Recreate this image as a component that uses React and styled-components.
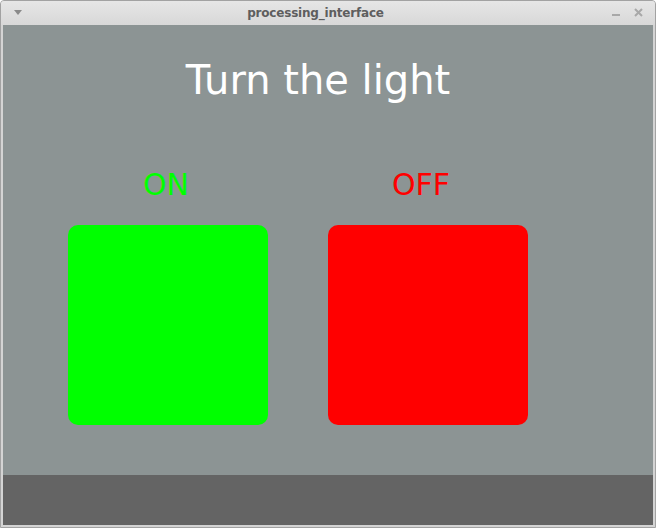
import React from "react";
import styled, { createGlobalStyle } from "styled-components";

const GlobalStyle = createGlobalStyle`
	html, body {
		margin: 0;
		padding: 0;
		background: #ffffff;
	}
	* {
		box-sizing: border-box;
	}
`;

function Switch({ label, color, shift }) {
	return (
		<Column>
			<Label color={color} $shift={shift}>
				{label}
			</Label>
			<Square color={color} />
		</Column>
	);
}

function App() {
	return (
		<>
			<GlobalStyle />
			<Window>
				<TitleBar>
					<Menu />
					<Title>processing_interface</Title>
					<Controls>
						<Minimize />
						<Close>
							<svg width="9" height="9" viewBox="0 0 9 9">
								<path d="M1 1 L8 8 M8 1 L1 8" stroke="#a8a8a8" strokeWidth="2" />
							</svg>
						</Close>
					</Controls>
				</TitleBar>
				<Canvas>
					<Heading>Turn the light</Heading>
					<Row>
						<Switch label="ON" color="#00ff00" shift={-2} />
						<Switch label="OFF" color="#ff0000" shift={-7} />
					</Row>
				</Canvas>
				<BottomBar />
			</Window>
		</>
	);
}

const Window = styled.div`
	width: 656px;
	height: 528px;
	display: flex;
	flex-direction: column;
	background: #d4d4d4;
	border: 1px solid #a2a2a2;
	border-radius: 4px 4px 0 0;
	padding: 0 2px 2px 2px;
	overflow: hidden;
`;

const TitleBar = styled.div`
	height: 24px;
	flex: none;
	display: flex;
	align-items: center;
	background: linear-gradient(#e6e6e6, #d8d8d8);
	margin: 0 -2px;
	padding: 0 12px 0 13px;
	font-family: "DejaVu Sans", sans-serif;
`;

const Menu = styled.div`
	width: 0;
	height: 0;
	border-left: 4px solid transparent;
	border-right: 4px solid transparent;
	border-top: 5px solid #8a8a8a;
	margin-top: -2px;
`;

const Title = styled.div`
	flex: 1;
	text-align: center;
	font-size: 12px;
	font-weight: bold;
	color: #5e5e5e;
	padding-right: 3px;
	letter-spacing: -0.2px;
`;

const Controls = styled.div`
	display: flex;
	align-items: center;
	gap: 14px;
`;

const Minimize = styled.div`
	width: 8px;
	height: 2px;
	background: #a8a8a8;
	margin-top: 3px;
`;

const Close = styled.div`
	display: flex;
	margin-top: -1px;
`;

const Canvas = styled.div`
	height: 450px;
	flex: none;
	display: flex;
	flex-direction: column;
	background: #8c9494;
	font-family: "DejaVu Sans", sans-serif;
`;

const Heading = styled.div`
	margin-top: 29px;
	padding-right: 20px;
	text-align: center;
	font-size: 40px;
	line-height: 52px;
	color: #ffffff;
`;

const Row = styled.div`
	display: flex;
	gap: 60px;
	padding-left: 65px;
	margin-top: 61px;
`;

const Column = styled.div`
	display: flex;
	flex-direction: column;
	align-items: center;
	width: 200px;
`;

const Label = styled.div`
	font-size: 30px;
	line-height: 36px;
	color: ${(p) => p.color};
	margin-left: ${(p) => p.$shift * 2}px;
	margin-bottom: 22px;
`;

const Square = styled.div`
	width: 200px;
	height: 200px;
	border-radius: 10px;
	background: ${(p) => p.color};
`;

const BottomBar = styled.div`
	flex: 1;
	background: #646464;
`;

export default App;
